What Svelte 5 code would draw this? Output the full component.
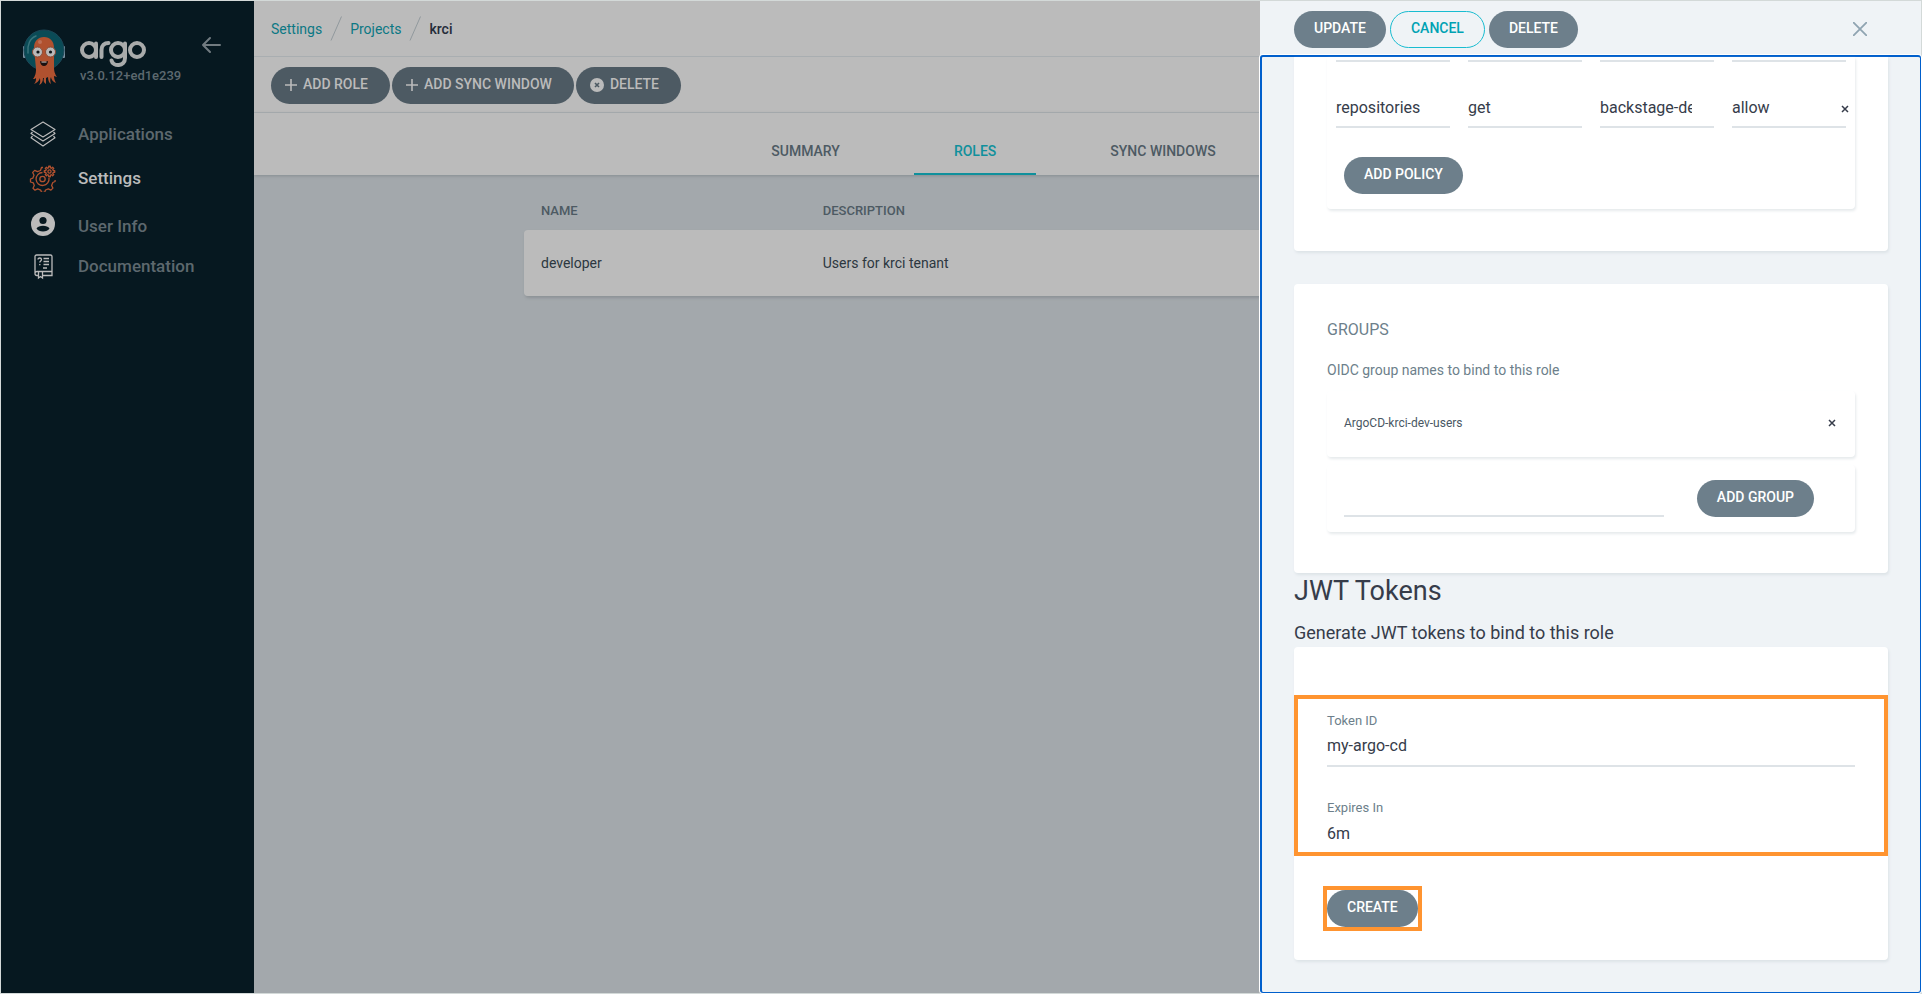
<script>
  const nav = [
    { label: 'Applications', icon: 'layers' },
    { label: 'Settings', icon: 'gears', active: true },
    { label: 'User Info', icon: 'user' },
    { label: 'Documentation', icon: 'docs' }
  ];
  const tabs = ['SUMMARY', 'ROLES', 'SYNC WINDOWS'];
  const activeTab = 'ROLES';
  const policy = [
    { label: 'Resource', value: 'repositories' },
    { label: 'Action', value: 'get' },
    { label: 'Object', value: 'backstage-demo' },
    { label: 'Permission', value: 'allow' }
  ];

  function gear(cx, cy, teeth, inner, outer) {
    const points = [];
    const step = (Math.PI * 2) / teeth;
    for (let i = 0; i < teeth; i++) {
      const a = i * step - Math.PI / 2;
      for (const [offset, r] of [[-0.3, inner], [-0.2, outer], [0.2, outer], [0.3, inner]]) {
        const t = a + offset * step;
        points.push(`${(cx + r * Math.cos(t)).toFixed(2)} ${(cy + r * Math.sin(t)).toFixed(2)}`);
      }
    }
    return `M${points.join('L')}Z`;
  }
</script>

{#snippet cross()}
  <svg width="8" height="8" viewBox="0 0 8 8" aria-hidden="true"><path d="M1 1l6 6M7 1L1 7" stroke="currentColor" stroke-width="1.5" /></svg>
{/snippet}

<div class="app">
  <aside class="sidebar">
    <div class="brand">
      <svg class="mascot" width="44" height="60" viewBox="0 0 44 60" aria-hidden="true">
        <rect x="1" y="18" width="3" height="12" rx="1" fill="#788f9f" />
        <rect x="40" y="18" width="3" height="12" rx="1" fill="#788f9f" />
        <circle cx="22" cy="22" r="20" fill="#0a4b56" stroke="#1c4656" />
        <path d="M6 25C5 17 8 10 14 8" fill="none" stroke="#39737b" stroke-width="1.5" stroke-linecap="round" />
        <path d="M12 20C12 13 16 9 22 9s10 4 10 11v19c0 5 1 7 3 10l-3-1c0 3 1 5 2 7-3-1-5-4-5-6-1 2-1 4 0 7-2-1-3-4-3-7l-2 1 0 6c-2-1-3-3-2-6h-1c0 3-1 6-4 7 2-3 1-5 1-7-1 3-3 5-6 6 2-2 2-4 2-6-1 1-2 1-3 1 2-3 3-5 3-10z" fill="#b0512f" />
        <circle cx="18" cy="14" r="2" fill="#bd6f56" />
        <circle cx="15.500" cy="24" r="5" fill="#b9b9b9" stroke="#8c4b35" />
        <circle cx="28.500" cy="24" r="5" fill="#b9b9b9" stroke="#8c4b35" />
        <circle cx="16" cy="24" r="1.600" fill="#10161a" />
        <circle cx="28.500" cy="24" r="1.600" fill="#10161a" />
        <path d="M18 33c2 1 6 1 8 0 0 3-2 5-4 5s-4-2-4-5z" fill="#1a1010" />
        <path d="M19.500 33.600h5v1h-5z" fill="#bbb" />
      </svg>
      <div class="brand-text">
        <svg width="68" height="28" viewBox="0 0 68 28" role="img" aria-label="argo" fill="none" stroke="#a9abab" stroke-width="4" stroke-linecap="round">
          <circle cx="9" cy="10" r="7" /><path d="M16 3.500V17" />
          <path d="M21.500 17v-7c0-4.500 3-7 7-7" />
          <circle cx="38" cy="10" r="7" /><path d="M45 3.500V18c0 9-12 9-13.500 2.500" />
          <circle cx="57" cy="10" r="7" />
        </svg>
        <span class="version">v3.0.12+ed1e239</span>
      </div>
      <button class="collapse" aria-label="Collapse">
        <svg width="20" height="18" viewBox="0 0 20 18" fill="none" stroke="#717b80" stroke-width="2" stroke-linecap="round" stroke-linejoin="round"><path d="M19 9H2M9 2L2 9l7 7" /></svg>
      </button>
    </div>
    <nav class="menu">
      {#each nav as item}
        <a href="#top" class:active={item.active} class={item.icon}>
          <svg width="28" height="28" viewBox="0 0 28 28" fill="none" aria-hidden="true">
            {#if item.icon === 'layers'}
              <g stroke="#bbb" stroke-width="1.200" stroke-linejoin="round">
                <path d="M14 2l12 7.500-12 7.500L2 9.500z" />
                <path d="M3.500 12L2 13.500 14 21l12-7.500-1.500-1.500" />
                <path d="M3.500 16L2 17.800 14 26l12-8.200-1.500-1.800" />
              </g>
            {:else if item.icon === 'gears'}
              <g stroke="#b0512f" stroke-width="1.300" stroke-linejoin="round">
                <path d="M14 3.500h-1.500l-1 3-3 1.200-2.800-1.300-2 2 1.300 2.800-1.200 3-2.300.8v3l2.800.8 1 2.700-1.300 2.700 2 2 2.700-1.300 3 1.200.9 2.400h3l.9-2.500 2.800-1.200 2.600 1.300 2-2-1.300-2.600 1.200-3 2.300-1v-1.500" />
                <path d="M13.500 8.500A6.500 6.500 0 1 0 20 14" />
                <circle cx="13.500" cy="15" r="2.700" />
                <path d={gear(20.5, 7.5, 8, 3.8, 5.3)} />
                <circle cx="20.500" cy="7.500" r="1.600" />
              </g>
            {:else if item.icon === 'user'}
              <circle cx="14" cy="14" r="12" fill="#bbb" />
              <circle cx="14" cy="10.500" r="3.600" fill="#061820" />
              <path d="M7.500 18.500C9.500 14.800 18.500 14.800 20.500 18.500 18.500 22.500 9.500 22.500 7.500 18.500z" fill="#061820" />
            {:else}
              <g stroke="#bbb" stroke-width="1.300">
                <path d="M9 23.500H8a2 2 0 0 1-2-2V4.500A1.500 1.500 0 0 1 7.500 3h14A1.500 1.500 0 0 1 23 4.500v19h-9M6 21a2 2 0 0 1 2-1.500h15" />
                <path d="M9.500 19.500V26l2-1.500 2 1.500v-6.500" />
                <path d="M9 7.500c0-2 3.500-2 3.500 0 0 1.500-1.700 1.300-1.700 3M10.800 12v1.200M14.500 6.500H20M14.500 9.500H20M14.500 12.500H20M14 16h4" />
              </g>
            {/if}
          </svg>
          <span>{item.label}</span>
        </a>
      {/each}
    </nav>
  </aside>

  <main class="main">
    <div class="crumbs">
      <a href="#settings">Settings</a>
      <svg width="12" height="25" viewBox="0 0 12 25" aria-hidden="true"><path d="M1 24.500L11.500.5" stroke="#91999d" /></svg>
      <a href="#projects">Projects</a>
      <svg width="12" height="25" viewBox="0 0 12 25" aria-hidden="true"><path d="M1 24.500L11.500.5" stroke="#91999d" /></svg>
      <span>krci</span>
    </div>
    <div class="toolbar">
      <button class="btn dim"><svg width="12" height="12" viewBox="0 0 12 12" aria-hidden="true"><path d="M6 0v12M0 6h12" stroke="currentColor" stroke-width="1.600" /></svg>ADD ROLE</button>
      <button class="btn dim"><svg width="12" height="12" viewBox="0 0 12 12" aria-hidden="true"><path d="M6 0v12M0 6h12" stroke="currentColor" stroke-width="1.600" /></svg>ADD SYNC WINDOW</button>
      <button class="btn dim"><svg width="14" height="14" viewBox="0 0 14 14" aria-hidden="true"><circle cx="7" cy="7" r="7" fill="currentColor" /><path d="M5 5l4 4M9 5L5 9" stroke="#4d5a63" stroke-width="1.600" /></svg>DELETE</button>
    </div>
    <nav class="tabs">
      {#each tabs as tab}
        <a href="#tab" class:active={tab === activeTab}>{tab}</a>
      {/each}
    </nav>
    <table class="roles">
      <thead><tr><th>NAME</th><th>DESCRIPTION</th></tr></thead>
      <tbody><tr><td>developer</td><td>Users for krci tenant</td></tr></tbody>
    </table>
  </main>

  <section class="panel">
    <header>
      <button class="btn">UPDATE</button>
      <button class="btn outline">CANCEL</button>
      <button class="btn">DELETE</button>
      <button class="close" aria-label="Close"><svg width="14" height="14" viewBox="0 0 14 14"><path d="M0 0l14 14M14 0L0 14" stroke="#8fa4b1" stroke-width="1.800" /></svg></button>
    </header>
    <div class="body">
      <div class="card policies">
        <div class="box">
          <div class="policy-row above"><i></i><i></i><i></i><i></i></div>
          <div class="policy-row">
            {#each policy as p}
              <input aria-label={p.label} value={p.value} class:clipped={p.label === 'Object'} />
            {/each}
            <button class="remove" aria-label="Remove policy">{@render cross()}</button>
          </div>
          <button class="btn add-policy">ADD POLICY</button>
        </div>
      </div>

      <div class="card groups">
        <p class="title">GROUPS</p>
        <p class="hint">OIDC group names to bind to this role</p>
        <div class="box group">
          <span>ArgoCD-krci-dev-users</span>
          <button class="remove" aria-label="Remove group">{@render cross()}</button>
        </div>
        <div class="box new-group">
          <input aria-label="Group name" />
          <button class="btn">ADD GROUP</button>
        </div>
      </div>

      <h2>JWT Tokens</h2>
      <p class="lead">Generate JWT tokens to bind to this role</p>
      <div class="card tokens">
        <div class="marked fields">
          <label for="token-id">Token ID</label>
          <input id="token-id" value="my-argo-cd" />
          <label for="expires-in">Expires In</label>
          <input id="expires-in" class="last" value="6m" />
        </div>
        <div class="marked create"><button class="btn">CREATE</button></div>
      </div>
    </div>
  </section>
</div>

<style>
  :global(body) { margin: 0; }
  * { box-sizing: border-box; }
  .app {
    display: grid;
    grid-template-columns: 253px minmax(0, 1fr) 661px;
    min-height: 100vh;
    border: 1px solid #d3d9d8;
    font-family: Roboto, sans-serif;
    font-size: 14px;
    color: #363c4a;
    background: #a3a8ac;
  }
  a { text-decoration: none; color: inherit; }
  p, h2 { margin: 0; font-weight: 400; }
  button { font: inherit; border: 0; background: none; padding: 0; cursor: pointer; }
  input { font: inherit; color: #363c4a; border: 0; outline: 0; border-radius: 0; background: none; padding: 0; min-width: 0; }
  svg { display: block; flex: none; }

  .sidebar { background: #061820; z-index: 1; }
  .brand { display: flex; align-items: flex-start; padding: 27px 33px 0 21px; height: 118px; }
  .brand-text { margin: 12px 0 0 14px; flex: 1; }
  .version { display: block; font-size: 13px; line-height: 16px; font-weight: 500; color: #5d696f; }
  .collapse { margin-top: 8px; }
  .menu a { display: flex; align-items: center; padding-left: 28px; gap: 21px; height: 30px; font-size: 17px; font-weight: 500; color: #5d686e; }
  .menu .layers { margin-bottom: 14px; }
  .menu .gears { margin-bottom: 18px; }
  .menu .user { margin-bottom: 10px; }
  .menu .user svg { margin-bottom: 5px; }
  .menu a.active { color: #bbb; }

  .main { grid-column: 2 / 4; grid-row: 1; }
  .sidebar, .panel { grid-row: 1; }
  .crumbs { display: flex; align-items: center; gap: 8px; height: 56px; padding-left: 17px; background: #bbb; border-bottom: 1px solid #a9aeb1; color: #0b7884; }
  .crumbs span { color: #252c3a; font-weight: 500; }
  .toolbar { display: flex; align-items: center; gap: 2px; height: 56px; padding: 2px 0 0 17px; background: #bbb; border-bottom: 1px solid #a9aeb1; }
  .btn { height: 37px; border-radius: 19px; padding: 0 20px 2px; background: #6d7f8b; color: #fff; font-size: 14px; font-weight: 500; line-height: 35px; white-space: nowrap; }
  .btn.dim { display: flex; align-items: center; gap: 6px; padding: 0 22px 2px 14px; background: #4d5a63; color: #bbb; }
  .btn.outline { background: none; border: 1px solid #18bcd0; color: #00a2b3; line-height: 33px; }
  .tabs { display: flex; justify-content: center; gap: 34px; height: 62px; padding-right: 188px; background: #bbb; box-shadow: 0 1px 3px #868d91; color: #4d5a63; font-weight: 500; }
  .tabs a { padding: 0 40px; line-height: 76px; height: 62px; border-bottom: 2px solid transparent; }
  .tabs a.active { color: #10909c; border-color: #10909c; }
  .roles { width: calc(100% - 540px); margin: 19px 270px 0; border-collapse: collapse; table-layout: fixed; text-align: left; }
  .roles th { height: 36px; padding: 0 17px 4px; font-size: 13px; font-weight: 500; color: #4d5a63; width: 25%; }
  .roles th:last-child { width: 75%; }
  .roles td { height: 66px; padding: 0 17px 1px; color: #2c3740; background: #bbb; }
  .roles tbody { box-shadow: 1px 2px 3px #8d9296; border-radius: 4px; }
  .roles td:first-child { border-radius: 4px 0 0 4px; }

  .panel { grid-column: 3; display: flex; flex-direction: column; background: #eff3f6; min-width: 0; z-index: 1; }
  .panel header { display: flex; align-items: center; gap: 4px; height: 54px; padding: 2px 54px 0 34px; }
  .close { margin-left: auto; }
  .body { flex: 1; border: solid #005fcc; border-width: 2px 1px 1px 2px; border-radius: 3px; padding: 0 32px; box-shadow: 0 0 0 1px #fff; }
  .card { background: #fff; border-radius: 4px; box-shadow: 1px 2px 3px #dde3e7; }
  .box { background: #fff; border-radius: 4px; box-shadow: 1px 2px 3px #e6eaec; }
  .policies { padding: 0 33px 42px; border-radius: 0 0 4px 4px; }
  .policies .box { padding-bottom: 15px; border-radius: 0 0 4px 4px; }
  .policy-row { display: grid; grid-template-columns: repeat(4, minmax(0, 1fr)); gap: 18px; padding: 0 9px; height: 66px; align-items: end; position: relative; }
  .policy-row.above { height: 5px; }
  .policy-row i { height: 2px; background: #dee3e7; }
  .policy-row input { height: 38px; font-size: 16px; border-bottom: 2px solid #dee3e7; padding-bottom: 1px; }
  .policy-row .clipped { padding-right: 22px; }
  .remove { color: #363c4a; }
  .policy-row .remove { position: absolute; right: 6px; bottom: 15px; }
  .add-policy { margin: 29px 0 0 17px; display: block; }
  .groups { margin-top: 33px; padding: 34px 33px 41px; }
  .title { font-size: 16px; line-height: 24px; color: #6d7f8b; }
  .hint { line-height: 20px; margin: 18px 0 11px; color: #6d7f8b; }
  .group { display: flex; align-items: center; justify-content: space-between; height: 66px; padding: 0 19px 2px 17px; font-size: 12px; color: #495763; }
  .new-group { display: flex; gap: 33px; margin-top: 8px; padding: 15px 41px 15px 17px; }
  .new-group input { flex: 1; border-bottom: 2px solid #dee3e7; }
  h2 { font-size: 27px; line-height: 36px; }
  .lead { font-size: 18px; line-height: 24px; margin: 12px 0 2px; }
  .tokens { padding: 48px 0 29px; }
  .marked { border: 4px solid #ff9430; }
  .fields { padding: 13px 29px 0; height: 161px; }
  .fields label { display: block; font-size: 13px; line-height: 18px; color: #6d7f8b; }
  .fields input { display: block; width: 100%; height: 37px; font-size: 16px; border-bottom: 2px solid #dee3e7; padding-bottom: 4px; margin-bottom: 32px; }
  .fields input.last { border: 0; margin: 0; }
  .create { width: max-content; margin: 30px 0 0 29px; }
  .create .btn { display: block; }
</style>
